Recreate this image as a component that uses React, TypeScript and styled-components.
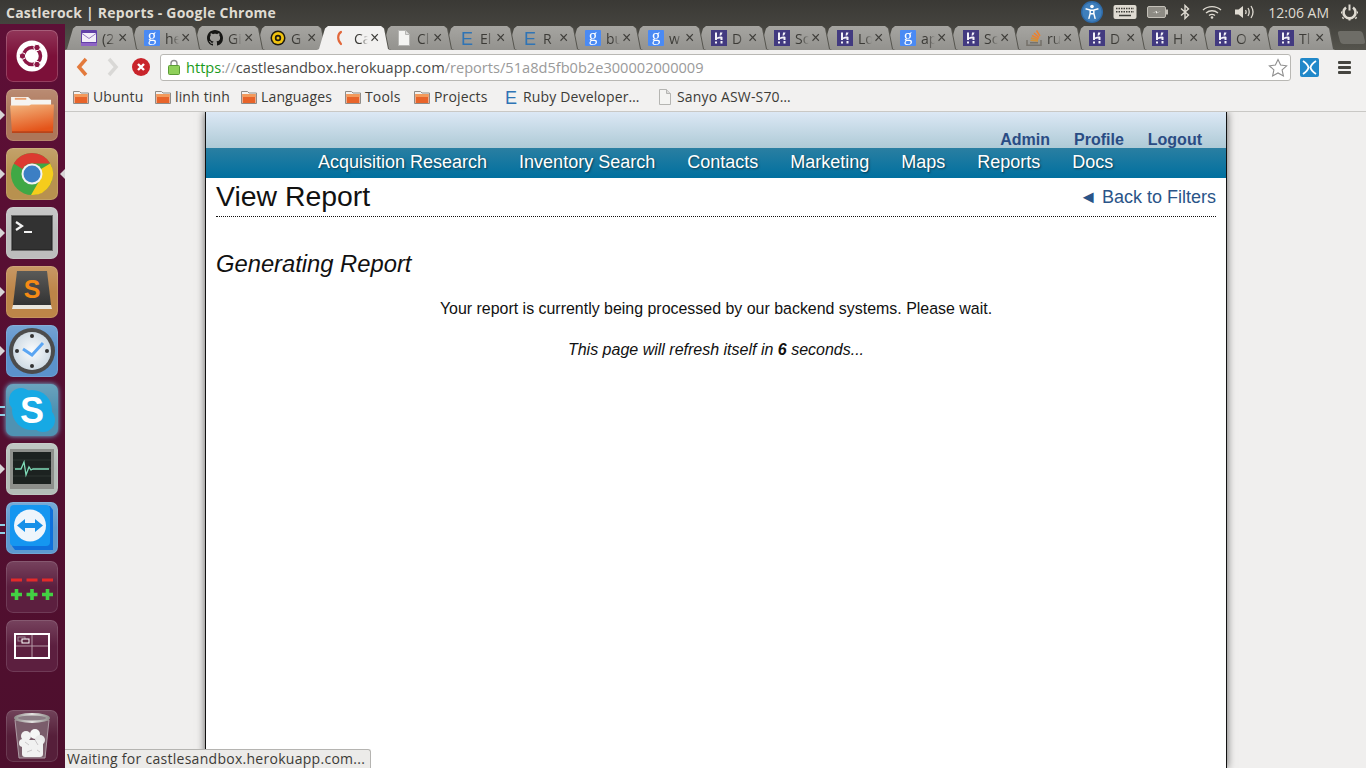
import React from 'react';
import styled, { createGlobalStyle } from 'styled-components';

const GlobalStyle = createGlobalStyle`
  html, body {
    margin: 0;
    padding: 0;
    background: #f0efee;
  }
  * {
    box-sizing: border-box;
  }
`;

type Favicon = 'mail' | 'google' | 'github' | 'gold' | 'spinner' | 'doc' | 'elance' | 'heroku' | 'stack';

const tabs: { icon: Favicon; label: string; active?: boolean }[] = [
  { icon: 'mail', label: '(2' },
  { icon: 'google', label: 'he' },
  { icon: 'github', label: 'Gi' },
  { icon: 'gold', label: 'G' },
  { icon: 'spinner', label: 'Ca', active: true },
  { icon: 'doc', label: 'Cl' },
  { icon: 'elance', label: 'El' },
  { icon: 'elance', label: 'R' },
  { icon: 'google', label: 'bu' },
  { icon: 'google', label: 'w' },
  { icon: 'heroku', label: 'D' },
  { icon: 'heroku', label: 'Sc' },
  { icon: 'heroku', label: 'Lo' },
  { icon: 'google', label: 'ap' },
  { icon: 'heroku', label: 'Sc' },
  { icon: 'stack', label: 'ru' },
  { icon: 'heroku', label: 'D' },
  { icon: 'heroku', label: 'H' },
  { icon: 'heroku', label: 'O' },
  { icon: 'heroku', label: 'Tl' },
];

const bookmarks: { icon: 'folder' | 'elance' | 'doc'; label: string; width: number }[] = [
  { icon: 'folder', label: 'Ubuntu', width: 82 },
  { icon: 'folder', label: 'linh tinh', width: 86 },
  { icon: 'folder', label: 'Languages', width: 104 },
  { icon: 'folder', label: 'Tools', width: 69 },
  { icon: 'folder', label: 'Projects', width: 89 },
  { icon: 'elance', label: 'Ruby Developer…', width: 154 },
  { icon: 'doc', label: 'Sanyo ASW-S70…', width: 150 },
];

const navLinks = ['Acquisition Research', 'Inventory Search', 'Contacts', 'Marketing', 'Maps', 'Reports', 'Docs'];

function TabFavicon({ icon }: { icon: Favicon }) {
  switch (icon) {
    case 'mail':
      return (
        <svg width="16" height="16" viewBox="0 0 16 16">
          <rect width="16" height="16" rx="1" fill="#6240a8" />
          <rect x="1" y="3" width="14" height="9" fill="#f3eef8" />
          <path d="M1 3.500 8 8.500l7-5" fill="none" stroke="#8a6cba" strokeWidth=".9" />
          <rect y="13" width="16" height="3" fill="#8f63c4" />
        </svg>
      );
    case 'google':
      return (
        <svg width="16" height="16" viewBox="0 0 16 16">
          <rect width="16" height="16" rx="1" fill="#4a8af4" />
          <text x="8" y="11" textAnchor="middle" fontSize="17" fontFamily="'Liberation Serif', serif" fill="#fff">
            g
          </text>
        </svg>
      );
    case 'github':
      return (
        <svg width="16" height="16" viewBox="0 0 16 16">
          <path
            fill="#161614"
            d="M8 0C3.580 0 0 3.580 0 8c0 3.540 2.290 6.530 5.470 7.590.4.070.55-.17.55-.38 0-.19-.010-.82-.010-1.490-2.010.37-2.530-.49-2.690-.94-.09-.23-.48-.94-.82-1.130-.28-.15-.68-.52-.010-.53.63-.010 1.080.58 1.230.82.720 1.210 1.870.87 2.330.66.070-.52.280-.87.510-1.070-1.780-.2-3.640-.89-3.640-3.950 0-.87.310-1.590.82-2.150-.08-.2-.36-1.020.08-2.120 0 0 .67-.21 2.200.82.640-.18 1.320-.27 2-.27s1.360.09 2 .27c1.530-1.040 2.200-.82 2.200-.82.440 1.100.16 1.920.08 2.120.51.560.82 1.270.82 2.150 0 3.070-1.870 3.750-3.650 3.950.29.250.54.730.54 1.480 0 1.070-.010 1.930-.010 2.200 0 .21.150.46.550.38A8.010 8.010 0 0 0 16 8c0-4.420-3.580-8-8-8z"
          />
        </svg>
      );
    case 'gold':
      return (
        <svg width="16" height="16" viewBox="0 0 16 16">
          <circle cx="8" cy="8" r="7.500" fill="#1d1a10" />
          <circle cx="8" cy="8" r="6" fill="#f2c40f" />
          <circle cx="8" cy="8" r="3.200" fill="#1d1a10" />
          <circle cx="8" cy="8" r="1.500" fill="#f2c40f" />
        </svg>
      );
    case 'spinner':
      return (
        <svg width="16" height="16" viewBox="0 0 16 16">
          <path d="M8 2C4.500 4 4 10 8 14" fill="none" stroke="#e2673a" strokeWidth="2.200" strokeLinecap="round" />
        </svg>
      );
    case 'doc':
      return (
        <svg width="16" height="16" viewBox="0 0 16 16">
          <path d="M2.500.5h7l4 4v11h-11z" fill="#f4f4f2" stroke="#b5b5b2" />
          <path d="M9.500.5v4h4" fill="#dcdcda" stroke="#b5b5b2" />
        </svg>
      );
    case 'elance':
      return (
        <svg width="16" height="16" viewBox="0 0 16 16" overflow="visible">
          <text x="8" y="14.500" textAnchor="middle" fontSize="18" fontFamily="'Liberation Sans', sans-serif" fill="#2f74b5">
            E
          </text>
        </svg>
      );
    case 'heroku':
      return (
        <svg width="16" height="16" viewBox="0 0 16 16">
          <rect width="16" height="16" fill="#423a80" />
          <path d="M4 2.500h2v5c2-1 4-1.200 5.500-.5v3h-2V8.500C8.500 8.300 7.100 8.500 6 9v1H4z" fill="#f3f2f8" />
          <path d="M4 11.500h2v2H4zM9.500 11h2v2.500h-2z" fill="#f3f2f8" />
          <path d="M9 2.500h2.500c-.2 1.200-.7 2.100-1.500 3H8.500c.3-1 .5-2 .5-3z" fill="#f3f2f8" />
        </svg>
      );
    case 'stack':
      return (
        <svg width="16" height="16" viewBox="0 0 16 16">
          <path d="M1 10v5.200h14V10" fill="none" stroke="#77736c" strokeWidth="1.600" />
          <path d="M4 12.800h8" stroke="#77736c" strokeWidth="1.600" />
          <path d="M4.500 10.300 12 11M5 8l7 1.800" stroke="#d0913a" strokeWidth="1.500" />
          <path d="M6 5.500l6.500 3.300M8 3l5 4.500M10.500 .5l3.500 5.500" stroke="#f0802a" strokeWidth="1.500" />
        </svg>
      );
  }
}

function FolderMark() {
  return (
    <svg width="16" height="16" viewBox="0 0 16 16">
      <path d="M.5 2.500h6l1.500 1.500h7.500v10.500H.5z" fill="#f4f3f1" stroke="#8f8c88" />
      <rect x="1.500" y="5" width="13" height="9" fill="#e8642a" />
      <rect x="1.500" y="5" width="13" height="3" fill="#f29a5c" />
    </svg>
  );
}

function PanelIndicators() {
  return (
    <Indicators>
      <Slot>
        <svg width="22" height="22" viewBox="0 0 24 24">
          <circle cx="12" cy="12" r="12" fill="#2f6ba8" />
          <circle cx="12" cy="12" r="10.500" fill="#3f7fbc" />
          <circle cx="12" cy="6" r="2" fill="#fff" />
          <path d="M5 8.500 10 10v3.500L8.500 19.500M19 8.500 14 10v3.500l1.500 6M10 10h4M10.500 14h3" fill="none" stroke="#fff" strokeWidth="1.600" />
        </svg>
      </Slot>
      <Slot>
        <svg width="24" height="14" viewBox="0 0 24 14">
          <rect x=".5" y="0" width="23" height="14" rx="2" fill="#dfdbd2" />
          <path d="M3 3.500h18M3 6.800h18" stroke="#3f3e39" strokeWidth="1.400" strokeDasharray="1.500 1" />
          <path d="M6 10.500h12" stroke="#3f3e39" strokeWidth="1.500" />
        </svg>
      </Slot>
      <Slot>
        <svg width="22" height="14" viewBox="0 0 22 14">
          <rect x=".5" y="1.500" width="18" height="11" rx="1.500" fill="#8d8b84" stroke="#c3c0b8" />
          <rect x="19" y="4.500" width="2" height="5" fill="#c3c0b8" />
          <path d="M5 8l5-2v1.500L14 6 9 8.500V7z" fill="#f2f1ec" />
        </svg>
      </Slot>
      <Slot $left={1}>
        <svg width="10" height="16" viewBox="0 0 10 16">
          <path d="M1 4.500 8.500 11 5 14.500v-13L8.500 5 1 11.500" fill="none" stroke="#dfdbd2" strokeWidth="1.400" />
        </svg>
      </Slot>
      <Slot $left={2}>
        <svg width="20" height="14" viewBox="0 0 20 14">
          <path d="M1 5c5-4.500 13-4.500 18 0M4 8c3.500-3 8.500-3 12 0M7 10.500c2-1.500 4-1.500 6 0" fill="none" stroke="#dfdbd2" strokeWidth="1.300" />
          <circle cx="10" cy="12.500" r="1.300" fill="#dfdbd2" />
        </svg>
      </Slot>
      <Slot $left={2}>
        <svg width="21" height="16" viewBox="0 0 21 16">
          <path d="M1 5.500h3.500L9 2v12L4.500 10.500H1z" fill="#dfdbd2" />
          <path d="M11.500 6c.8 1.300.8 2.700 0 4M14 4c1.500 2.500 1.500 5.500 0 8M17 2c2.500 3.700 2.500 8.300 0 12" fill="none" stroke="#dfdbd2" strokeWidth="1.300" />
        </svg>
      </Slot>
      <Slot $left={3}>
        <PanelClock>12:06 AM</PanelClock>
      </Slot>
      <Slot $left={2}>
        <svg width="17" height="18" viewBox="0 0 17 18">
          <path d="M8.500 1.500v6" stroke="#dfdbd2" strokeWidth="2" />
          <path d="M5 4.500a6 6 0 1 0 7 0" fill="none" stroke="#dfdbd2" strokeWidth="2.600" />
          <path d="M8.500 15.500v2M1 9.500H0M17 9.500h-1M2.500 14.500 1.500 15.500M14.500 14.500l1 1" stroke="#dfdbd2" strokeWidth="2" />
        </svg>
      </Slot>
    </Indicators>
  );
}

function DashLogo() {
  return (
    <svg width="32" height="32" viewBox="0 0 32 32">
      <circle cx="16" cy="16" r="15.500" fill="#fff" />
      <circle cx="16" cy="16" r="8.500" fill="none" stroke="#8a1745" strokeWidth="3.500" />
      <circle cx="6.500" cy="16" r="3.200" fill="#8a1745" stroke="#fff" />
      <circle cx="21" cy="7.500" r="3.200" fill="#8a1745" stroke="#fff" />
      <circle cx="21" cy="24.500" r="3.200" fill="#8a1745" stroke="#fff" />
    </svg>
  );
}

function FilesIcon() {
  return (
    <svg width="46" height="40" viewBox="0 0 48 42">
      <defs>
        <linearGradient id="files" x1="0" y1="0" x2="0.300" y2="1">
          <stop offset="0" stopColor="#f2b67e" />
          <stop offset="1" stopColor="#e4541a" />
        </linearGradient>
      </defs>
      <path d="M2 2h18l3 3h21v10H2z" fill="#f5f4f1" />
      <rect x="6" y="3" width="12" height="2" fill="#eaa070" />
      <path d="M1 11h20l2-1h24l-1 30H3z" fill="url(#files)" />
      <path d="M3 40h43v-2H3z" fill="#b9441a" />
    </svg>
  );
}

function ChromeIcon() {
  return (
    <svg width="44" height="44" viewBox="0 0 44 44">
      <circle cx="22" cy="22" r="21" fill="#3fa845" />
      <path d="M3.800 11.500A21 21 0 0 1 40.200 11.500H22A10.500 10.500 0 0 0 12.500 17z" fill="#dc3b30" />
      <path d="M40.200 11.500A21 21 0 0 1 21 43l9-15.500A10.500 10.500 0 0 0 31 17z" fill="#f5cc1c" />
      <circle cx="22" cy="22" r="10.500" fill="#f3f3f3" />
      <circle cx="22" cy="22" r="8.500" fill="#3c7fc4" />
    </svg>
  );
}

function TerminalIcon() {
  return (
    <svg width="42" height="36" viewBox="0 0 42 36">
      <rect x=".5" y=".5" width="41" height="35" fill="#292929" stroke="#6a6a6a" />
      <rect x="2" y="2" width="38" height="32" fill="#323232" />
      <path d="M5 7l6 4-6 4" fill="none" stroke="#f2f2f2" strokeWidth="2.200" />
      <path d="M13 17h8" stroke="#f2f2f2" strokeWidth="2" />
    </svg>
  );
}

function SublimeIcon() {
  return (
    <svg width="44" height="44" viewBox="0 0 44 44">
      <defs>
        <linearGradient id="slate" x1="0" x2="0" y1="0" y2="1">
          <stop offset="0" stopColor="#5a5a58" />
          <stop offset="1" stopColor="#333" />
        </linearGradient>
      </defs>
      <path d="M7 1h30l4 34H3z" fill="url(#slate)" />
      <path d="M3 35h38l1 4H2z" fill="#e9e6de" />
      <text x="22" y="28" textAnchor="middle" fontSize="25" fontWeight="700" fontFamily="'Liberation Sans', sans-serif" fill="#f58a15">
        S
      </text>
    </svg>
  );
}

function ClockIcon() {
  return (
    <svg width="46" height="46" viewBox="0 0 46 46">
      <defs>
        <radialGradient id="face">
          <stop offset="0" stopColor="#fbfcfd" />
          <stop offset="1" stopColor="#cfdbe4" />
        </radialGradient>
      </defs>
      <circle cx="23" cy="23" r="23" fill="#4c4c4c" />
      <circle cx="23" cy="23" r="19" fill="url(#face)" />
      <circle cx="23" cy="8" r="2" fill="#333" />
      <circle cx="23" cy="38" r="2" fill="#333" />
      <circle cx="8" cy="23" r="2" fill="#333" />
      <circle cx="38" cy="23" r="2" fill="#333" />
      <path d="M14 21l9 6 11-12" fill="none" stroke="#5aa5f2" strokeWidth="3" />
    </svg>
  );
}

function SkypeIcon() {
  return (
    <svg width="48" height="46" viewBox="0 0 48 46">
      <circle cx="24" cy="23" r="20" fill="#17a9e4" />
      <circle cx="13" cy="13" r="12" fill="#17a9e4" />
      <circle cx="35" cy="33" r="12" fill="#17a9e4" />
      <text x="24" y="36" textAnchor="middle" fontSize="36" fontWeight="700" fontFamily="'Liberation Sans', sans-serif" fill="#fff">
        S
      </text>
    </svg>
  );
}

function MonitorIcon() {
  return (
    <svg width="44" height="40" viewBox="0 0 44 40">
      <rect width="44" height="40" fill="#8d8f8b" />
      <rect x="3" y="3" width="38" height="32" fill="#1c2220" />
      <path d="M3 11h38M3 19h38M3 27h38" stroke="#2c3431" />
      <path d="M5 20h6l3-7 2 13 3-8 2 3 2-1h16" fill="none" stroke="#7fdcb8" strokeWidth="1.300" />
    </svg>
  );
}

function TeamViewerIcon() {
  return (
    <svg width="46" height="46" viewBox="0 0 46 46">
      <path d="M3 1h38l3 4v40H6l-3-4z" fill="#0f70dc" />
      <rect x="1" y="0" width="40" height="41" rx="4" fill="#1596f0" />
      <circle cx="21" cy="20.500" r="16" fill="#eef5fb" />
      <path d="M8 20.500l8-6.500v4h10v-4l8 6.500-8 6.500v-4H16v4z" fill="#1590e8" />
    </svg>
  );
}

function AppletIcon() {
  return (
    <svg width="42" height="26" viewBox="0 0 42 26">
      <path d="M0 6h11M15.500 6h11M31 6h11" stroke="#e42a2a" strokeWidth="3" />
      <path d="M0 20.500h11M5.500 15v11M15.500 20.500h11M21 15v11M31 20.500h11M36.500 15v11" stroke="#43d043" strokeWidth="3.600" />
    </svg>
  );
}

function WorkspaceIcon() {
  return (
    <svg width="36" height="26" viewBox="0 0 36 26">
      <rect x="1" y="1" width="34" height="24" fill="none" stroke="#fff" strokeWidth="2" />
      <path d="M18 2v22M2 13h32" stroke="#b59aa6" strokeWidth="1" />
      <rect x="4" y="4" width="7" height="4" fill="none" stroke="#a08a95" />
      <rect x="8" y="6" width="7" height="4" fill="#5c2641" stroke="#fff" />
    </svg>
  );
}

function TrashIcon() {
  return (
    <svg width="38" height="48" viewBox="0 0 38 48">
      <defs>
        <linearGradient id="rim" x1="0" x2="1">
          <stop offset="0" stopColor="#8d8a88" />
          <stop offset=".5" stopColor="#e4e3e1" />
          <stop offset="1" stopColor="#8d8a88" />
        </linearGradient>
      </defs>
      <path d="M2 8l4 38h26l4-38z" fill="#7a5d6b" stroke="#ad9ba4" />
      <ellipse cx="19" cy="6" rx="18" ry="5" fill="url(#rim)" />
      <ellipse cx="19" cy="6" rx="14" ry="2.500" fill="#8b7c84" />
      <circle cx="13" cy="24" r="5" fill="#f1f1f1" />
      <circle cx="22" cy="22" r="5" fill="#f6f6f6" />
      <circle cx="27" cy="28" r="5" fill="#e9e9e9" />
      <circle cx="10" cy="31" r="4" fill="#f1f1f1" />
      <rect x="9" y="28" width="21" height="17" rx="3" fill="#f1f1f1" />
      <path d="M12 30l4 3M22 28l3 5M14 40l5-2M24 38l3 2" stroke="#c9c6c8" />
    </svg>
  );
}

export default function App() {
  return (
    <Screen>
      <GlobalStyle />
      <TopPanel>
        <WindowTitle>Castlerock | Reports - Google Chrome</WindowTitle>
        <PanelIndicators />
      </TopPanel>
      <Desktop>
        <Launcher>
          <DashTile>
            <DashLogo />
          </DashTile>
          <LauncherTile $tint="#ad7659" $pip="arrow">
            <FilesIcon />
          </LauncherTile>
          <LauncherTile $tint="#b8914f" $pip="arrow" $focused>
            <ChromeIcon />
          </LauncherTile>
          <LauncherTile $tint="#bdbdbd" $pip="arrow">
            <TerminalIcon />
          </LauncherTile>
          <LauncherTile $tint="#bd8548" $pip="arrow">
            <SublimeIcon />
          </LauncherTile>
          <LauncherTile $tint="#5b92cc" $pip="arrow">
            <ClockIcon />
          </LauncherTile>
          <LauncherTile $tint="#4f92b2" $pip="bars" $glow>
            <SkypeIcon />
          </LauncherTile>
          <LauncherTile $tint="#b4bdb8" $pip="arrow">
            <MonitorIcon />
          </LauncherTile>
          <LauncherTile $tint="#5d9ad0" $pip="bars">
            <TeamViewerIcon />
          </LauncherTile>
          <LauncherTile $tint="#5c1f3f">
            <AppletIcon />
          </LauncherTile>
          <LauncherTile $tint="#5c1f3f">
            <WorkspaceIcon />
          </LauncherTile>
          <TrashTile $tint="#561f3a">
            <TrashIcon />
          </TrashTile>
        </Launcher>
        <Browser>
          <TabStrip>
            {tabs.map((tab, i) => (
              <Tab key={i} $layer={tab.active ? 50 : 30 - i}>
                <TabShape $active={tab.active}>
                  <TabFavicon icon={tab.icon} />
                  <TabLabel>{tab.label}</TabLabel>
                  <TabClose>×</TabClose>
                </TabShape>
              </Tab>
            ))}
            <NewTabButton />
          </TabStrip>
          <Toolbar>
            <NavArrow viewBox="0 0 14 20" width="14" height="20">
              <path d="M11 2 4 10l7 8" fill="none" stroke="#e37a3c" strokeWidth="3.500" />
            </NavArrow>
            <ForwardArrow viewBox="0 0 14 20" width="14" height="20">
              <path d="M3 2l7 8-7 8" fill="none" stroke="#d9d8d6" strokeWidth="3.500" />
            </ForwardArrow>
            <svg width="18" height="18" viewBox="0 0 18 18">
              <circle cx="9" cy="9" r="9" fill="#c9242b" />
              <path d="M6 6l6 6M12 6l-6 6" stroke="#fff" strokeWidth="2.400" />
            </svg>
            <Omnibox>
              <svg width="12" height="16" viewBox="0 0 12 16">
                <path d="M3 7V4.500a3 3 0 0 1 6 0V7" fill="none" stroke="#8f8f8f" strokeWidth="1.400" />
                <rect x=".5" y="6.500" width="11" height="9" rx="1" fill="#8fd05a" stroke="#5a9b35" />
              </svg>
              <UrlText>
                <UrlScheme>https</UrlScheme>
                <UrlMuted>://</UrlMuted>
                castlesandbox.herokuapp.com
                <UrlMuted>/reports/51a8d5fb0b2e300002000009</UrlMuted>
              </UrlText>
              <svg width="20" height="19" viewBox="0 0 20 19">
                <path d="M10 1.500l2.600 5.600 6 .7-4.500 4.100 1.300 6L10 14.900l-5.400 3 1.300-6L1.400 7.800l6-.7z" fill="#fff" stroke="#8e8e8e" strokeWidth="1.100" />
              </svg>
            </Omnibox>
            <ExtensionBadge>
              <svg width="19" height="19" viewBox="0 0 19 19">
                <rect width="19" height="19" rx="2" fill="#2188c9" />
                <path d="M3 3c3 2 5 4 5.500 6.500C8 12 6 14 3 16M16 3c-3 2-5 4-5.500 6.500.5 2.500 2.500 4.500 5.500 6.500" fill="none" stroke="#fff" strokeWidth="1.800" />
              </svg>
            </ExtensionBadge>
            <MenuButton>
              <span />
              <span />
              <span />
            </MenuButton>
          </Toolbar>
          <BookmarkBar>
            {bookmarks.map((bookmark) => (
              <Bookmark key={bookmark.label} style={{ width: bookmark.width }}>
                {bookmark.icon === 'folder' ? <FolderMark /> : <TabFavicon icon={bookmark.icon} />}
                <span>{bookmark.label}</span>
              </Bookmark>
            ))}
          </BookmarkBar>
          <Viewport>
            <Page>
              <UserBar>
                <UserLink>Admin</UserLink>
                <UserLink>Profile</UserLink>
                <UserLink>Logout</UserLink>
              </UserBar>
              <NavBar>
                {navLinks.map((link) => (
                  <NavLink key={link}>{link}</NavLink>
                ))}
              </NavBar>
              <Content>
                <TitleRow>
                  <Heading>View Report</Heading>
                  <BackLink>◄ Back to Filters</BackLink>
                </TitleRow>
                <SubHeading>Generating Report</SubHeading>
                <Notice>Your report is currently being processed by our backend systems. Please wait.</Notice>
                <Countdown>
                  This page will refresh itself in <strong>6</strong> seconds...
                </Countdown>
              </Content>
            </Page>
            <StatusBubble>Waiting for castlesandbox.herokuapp.com...</StatusBubble>
          </Viewport>
        </Browser>
      </Desktop>
    </Screen>
  );
}

const UI_FONT = `'Open Sans', 'Noto Sans', sans-serif`;
const PAGE_FONT = `'Liberation Sans', Arial, sans-serif`;

const Screen = styled.div`
  width: 1366px;
  height: 768px;
  display: flex;
  flex-direction: column;
  overflow: hidden;
`;

const TopPanel = styled.header`
  height: 24px;
  flex: none;
  display: flex;
  align-items: center;
  justify-content: space-between;
  padding: 0 8px 0 6px;
  background: linear-gradient(#3a3935, #44433e);
`;

const WindowTitle = styled.div`
  font: 700 14px ${UI_FONT};
  letter-spacing: 0.23px;
  color: #dfdbd2;
`;

const Indicators = styled.div`
  display: flex;
  align-items: center;
  gap: 10px;
`;

const Slot = styled.span<{ $left?: number }>`
  display: flex;
  align-items: center;
  margin-left: ${(p) => p.$left ?? 0}px;
`;

const PanelClock = styled.span`
  font: 400 14px ${UI_FONT};
  color: #dfdbd2;
`;

const Desktop = styled.div`
  flex: 1;
  min-height: 0;
  display: flex;
`;

const Launcher = styled.nav`
  width: 65px;
  flex: none;
  display: flex;
  flex-direction: column;
  align-items: center;
  gap: 7px;
  padding: 6px 2px 6px 0;
  background: linear-gradient(#5d0f36, #4d0f2d);
`;

const LauncherTile = styled.div<{ $tint: string; $pip?: 'arrow' | 'bars'; $focused?: boolean; $glow?: boolean }>`
  position: relative;
  width: 52px;
  height: 52px;
  flex: none;
  display: flex;
  align-items: center;
  justify-content: center;
  border-radius: 7px;
  background: linear-gradient(rgba(255, 255, 255, 0.16), rgba(255, 255, 255, 0) 50%), ${(p) => p.$tint};
  box-shadow: ${(p) => (p.$glow ? '0 0 5px #6fc4e6' : 'inset 0 0 0 1px rgba(255, 255, 255, 0.12)')};

  &::before {
    content: '';
    position: absolute;
    left: -6px;
    top: ${(p) => (p.$pip === 'bars' ? '22px' : '21px')};
    display: ${(p) => (p.$pip ? 'block' : 'none')};
    width: ${(p) => (p.$pip === 'bars' ? '5px' : '0')};
    height: ${(p) => (p.$pip === 'bars' ? '6px' : '0')};
    border-style: solid;
    border-color: ${(p) => (p.$pip === 'bars' ? '#8fd0e6' : 'transparent transparent transparent #d8d4d6')};
    border-width: ${(p) => (p.$pip === 'bars' ? '2px 0' : '5px 0 5px 5px')};
  }

  &::after {
    content: '';
    position: absolute;
    right: -7px;
    top: 21px;
    display: ${(p) => (p.$focused ? 'block' : 'none')};
    border-style: solid;
    border-color: transparent #d8d4d6 transparent transparent;
    border-width: 5px 5px 5px 0;
  }
`;

const DashTile = styled(LauncherTile).attrs({ $tint: '#7c1039' })`
  box-shadow: inset 0 0 0 1px rgba(255, 255, 255, 0.2);
`;

const TrashTile = styled(LauncherTile)`
  margin-top: auto;
`;

const Browser = styled.main`
  flex: 1;
  min-width: 0;
  display: flex;
  flex-direction: column;
`;

const TabStrip = styled.div`
  height: 26px;
  flex: none;
  display: flex;
  align-items: flex-end;
  background: linear-gradient(#44433e, #55544d);
`;

const Tab = styled.div<{ $layer: number }>`
  position: relative;
  z-index: ${(p) => p.$layer};
  width: 73px;
  height: 24px;
  flex: none;
  margin-right: -10px;
  filter: drop-shadow(1px 0 0 #55544e);
`;

const TabShape = styled.div<{ $active?: boolean }>`
  height: 100%;
  display: flex;
  align-items: center;
  padding-left: 16px;
  background: ${(p) => (p.$active ? '#f2f1f0' : 'linear-gradient(#a6a5a1, #93928e)')};
  clip-path: polygon(0 100%, 2px 96%, 8px 10%, 11px 0, 64px 0, 67px 10%, 71px 96%, 73px 100%);
`;

const TabLabel = styled.span`
  width: 14px;
  margin-left: 5px;
  overflow: hidden;
  white-space: nowrap;
  font: 400 14px ${UI_FONT};
  color: #3c3b37;
  -webkit-mask-image: linear-gradient(90deg, #000 45%, transparent);
  mask-image: linear-gradient(90deg, #000 45%, transparent);
`;

const TabClose = styled.span`
  margin-left: 2px;
  font: 400 16px ${PAGE_FONT};
  line-height: 16px;
  color: #3f3e3a;
`;

const NewTabButton = styled.div`
  width: 25px;
  height: 13px;
  margin: 0 0 6px 14px;
  background: #6e6d67;
  border-radius: 3px;
  transform: skewX(15deg);
`;

const Toolbar = styled.div`
  height: 34px;
  flex: none;
  display: flex;
  align-items: center;
  padding: 0 12px 0 10px;
  background: #f2f1f0;
`;

const NavArrow = styled.svg`
  margin-right: 17px;
  flex: none;
`;

const ForwardArrow = styled(NavArrow)`
  margin-right: 12px;
`;

const Omnibox = styled.div`
  width: 1131px;
  height: 27px;
  margin-left: 10px;
  flex: none;
  display: flex;
  align-items: center;
  gap: 6px;
  padding: 0 2px 0 7px;
  background: #fff;
  border: 1px solid #b9b8b4;
  border-radius: 3px;
`;

const UrlText = styled.div`
  flex: 1;
  font: 400 14.600px ${UI_FONT};
  color: #4a4a48;
  white-space: nowrap;
`;

const UrlScheme = styled.span`
  color: #1b9b1b;
`;

const UrlMuted = styled.span`
  color: #9a9a9a;
`;

const ExtensionBadge = styled.div`
  margin-left: 9px;
  display: flex;
`;

const MenuButton = styled.div`
  margin-left: 19px;
  width: 13px;
  display: flex;
  flex-direction: column;
  gap: 2px;

  span {
    height: 3px;
    background: #45443f;
    border-radius: 1px;
  }
`;

const BookmarkBar = styled.div`
  height: 28px;
  flex: none;
  display: flex;
  align-items: center;
  padding: 0 0 2px 8px;
  background: #f2f1f0;
  border-bottom: 1px solid #c9c8c5;
`;

const Bookmark = styled.div`
  flex: none;
  display: flex;
  align-items: center;
  gap: 4px;
  font: 400 14px ${UI_FONT};
  letter-spacing: 0.15px;
  color: #3c3b37;
  white-space: nowrap;
`;

const Viewport = styled.div`
  position: relative;
  flex: 1;
  min-height: 0;
  padding-left: 140px;
  background: #f0efee;
  overflow: hidden;
`;

const Page = styled.section`
  width: 1022px;
  height: 100%;
  background: #fff;
  border-left: 1px solid #111;
  border-right: 1px solid #111;
  box-shadow: 0 0 8px rgba(0, 0, 0, 0.6);
  font-family: ${PAGE_FONT};
`;

const UserBar = styled.div`
  height: 36px;
  display: flex;
  align-items: flex-end;
  justify-content: flex-end;
  gap: 24px;
  padding-right: 24px;
  background: linear-gradient(#dce8f5, #aecad6);
`;

const UserLink = styled.a`
  font-size: 16px;
  font-weight: 700;
  line-height: 16px;
  color: #2a4c84;
`;

const NavBar = styled.div`
  height: 30px;
  display: flex;
  align-items: center;
  gap: 32px;
  padding: 0 0 2px 112px;
  background: linear-gradient(#2a7fa2, #00709f);
`;

const NavLink = styled.a`
  font-size: 18px;
  color: #fff;
  text-shadow: 1px 1px 2px rgba(0, 0, 0, 0.5);
`;

const Content = styled.div`
  padding: 0 10px;
`;

const TitleRow = styled.div`
  height: 39px;
  display: flex;
  align-items: center;
  justify-content: space-between;
  border-bottom: 1px dotted #111;
`;

const Heading = styled.h1`
  margin: -2px 0 0;
  font-size: 28.400px;
  font-weight: 400;
  color: #111;
`;

const BackLink = styled.a`
  font-size: 18px;
  color: #2a5488;
`;

const SubHeading = styled.h2`
  margin: 33px 0 0;
  font-size: 23.750px;
  line-height: 28px;
  font-weight: 400;
  font-style: italic;
  color: #111;
`;

const Notice = styled.p`
  margin: 21px 0 0;
  font-size: 15.950px;
  line-height: 20px;
  text-align: center;
  color: #111;
`;

const Countdown = styled(Notice)`
  font-style: italic;
  font-size: 16px;
`;

const StatusBubble = styled.div`
  position: absolute;
  left: 0;
  bottom: 0;
  width: 306px;
  height: 19px;
  padding-left: 2px;
  font: 400 14px/18px ${UI_FONT};
  letter-spacing: 0.28px;
  color: #3c3b37;
  white-space: nowrap;
  background: #ecebe9;
  border: 1px solid #b5b4b1;
  border-left: 0;
  border-bottom: 0;
  border-top-right-radius: 3px;
`;
